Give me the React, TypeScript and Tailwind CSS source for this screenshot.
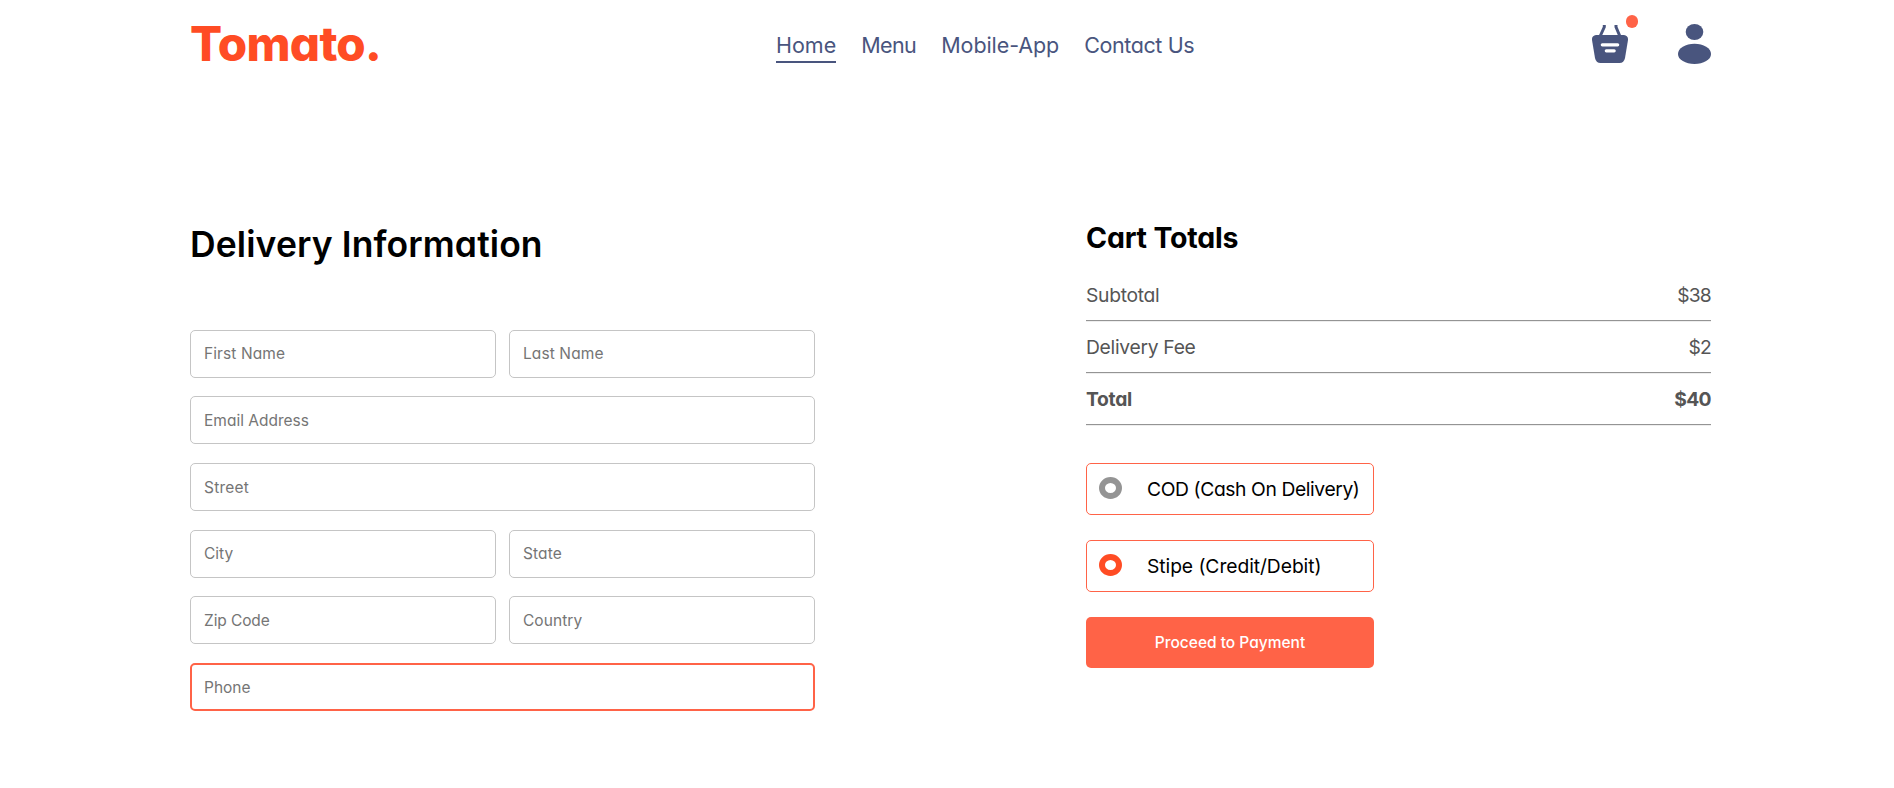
const navItems = [
  { label: "Home", className: "border-b-2 border-[#49557e]" },
  { label: "Menu", className: "tracking-[-0.6px]" },
  { label: "Mobile-App", className: "tracking-[-0.08px]" },
  { label: "Contact Us", className: "tracking-[-0.4px]" },
];

const fields = [
  { label: "First Name", className: "border border-[#c5c5c5] px-[13px] tracking-[0.1px]" },
  { label: "Last Name", className: "border border-[#c5c5c5] px-[13px] tracking-[0.1px]" },
  { label: "Email Address", className: "col-span-2 border border-[#c5c5c5] px-[13px]" },
  { label: "Street", className: "col-span-2 border border-[#c5c5c5] px-[13px] tracking-[0.2px]" },
  { label: "City", className: "border border-[#c5c5c5] px-[13px]" },
  { label: "State", className: "border border-[#c5c5c5] px-[13px] tracking-[0.1px]" },
  { label: "Zip Code", className: "border border-[#c5c5c5] px-[13px] tracking-[-0.1px]" },
  { label: "Country", className: "border border-[#c5c5c5] px-[13px] tracking-[0.05px]" },
  { label: "Phone", className: "col-span-2 border-2 border-[#ff6347] px-[12px]" },
];

const totals = [
  { label: "Subtotal", value: "$38", row: "", labelClass: "tracking-[-0.3px]", valueClass: "tracking-[-0.8px]" },
  { label: "Delivery Fee", value: "$2", row: "", labelClass: "tracking-[-0.3px]", valueClass: "tracking-[-0.8px]" },
  { label: "Total", value: "$40", row: "font-bold", labelClass: "tracking-[-0.3px]", valueClass: "tracking-[-0.6px]" },
];

const payments = [
  { label: "COD (Cash On Delivery)", color: "#949494", className: "tracking-[-0.4px]" },
  { label: "Stipe (Credit/Debit)", color: "#ff4c24", className: "tracking-[-0.07px]" },
];

function Basket() {
  return (
    <svg width="36" height="38" viewBox="0 0 36 38" className="block">
      <path d="M8 11.500 12.300 2V0M28 11.500 24 2V0" stroke="#49557e" strokeWidth="3" fill="none" />
      <path d="M4 10H32Q36.500 11 36 15L33 33Q32 38 27.500 38H8.500Q4 38 3 33L0 15Q-.5 11 4 10Z" fill="#49557e" />
      <path d="M10.300 19.800H25.700M14.300 25.800H22.200" stroke="#fff" strokeWidth="3.200" strokeLinecap="round" />
    </svg>
  );
}

function Person() {
  return (
    <svg width="33" height="40" viewBox="0 0 33 40" className="block">
      <ellipse cx="16.500" cy="8" rx="8.800" ry="8" fill="#49557e" />
      <ellipse cx="16.500" cy="29.900" rx="16.500" ry="10.100" fill="#49557e" />
    </svg>
  );
}

function Ring({ color }: { color: string }) {
  return (
    <svg width="23" height="22" viewBox="0 0 23 22" className="mb-[2px] block">
      <ellipse cx="11.500" cy="11" rx="8.500" ry="8" fill="none" stroke={color} strokeWidth="6" />
    </svg>
  );
}

export default function App() {
  return (
    <div className="min-h-[788px] bg-white font-['Inter',sans-serif] text-black [font-feature-settings:'cv11','liga'_0,'calt'_0]">
      <header className="flex h-[219px] items-start pl-[190px] pr-[183px]">
        <div className="mt-[19px] w-[586px] text-[47.5px] font-extrabold leading-[50px] tracking-[-0.7px] text-[#ff4c24]">
          Tomato.
        </div>
        <nav className="mt-[31px] flex gap-[25px] text-[21.5px] leading-[28px] text-[#49557e]">
          {navItems.map((item) => (
            <a key={item.label} href="#" className={"pb-[2px] " + item.className}>
              {item.label}
            </a>
          ))}
        </nav>
        <div className="ml-auto mt-[24px] flex gap-[50px]">
          <div className="relative mt-[1px]">
            <Basket />
            <span className="absolute -right-[10px] -top-[10px] h-[13px] w-[12px] rounded-full bg-[#ff6347]" />
          </div>
          <Person />
        </div>
      </header>
      <main className="flex justify-between pl-[190px] pr-[183px]">
        <section className="w-[625px] pt-[3px]">
          <h1 className="text-[35.5px] font-semibold leading-[46px] tracking-[0.1px]">Delivery Information</h1>
          <div className="mt-[61.7px] grid grid-cols-2 gap-x-[13px] gap-y-[18.7px]">
            {fields.map((field) => (
              <input
                key={field.label}
                placeholder={field.label}
                className={"h-[48px] w-full rounded-[5px] text-[15.5px] outline-none placeholder-[#757575] " + field.className}
              />
            ))}
          </div>
        </section>
        <section className="w-[625px]">
          <h2 className="text-[28.5px] font-bold leading-[38px] tracking-[-0.2px]">Cart Totals</h2>
          <div className="mt-[26px] flex flex-col gap-[14px] text-[19.3px] leading-[24px] text-[#555]">
            {totals.map((t) => (
              <div
                key={t.label}
                className={"flex justify-between border-b border-[#949494] pb-[13px] shadow-[0_1px_0_#eeeeee] " + t.row}
              >
                <span className={t.labelClass}>{t.label}</span>
                <span className={t.valueClass}>{t.value}</span>
              </div>
            ))}
          </div>
          <div className="mt-[38px] flex w-[288px] flex-col gap-[25px]">
            {payments.map((p) => (
              <div
                key={p.label}
                className="flex h-[52px] items-center gap-[25px] rounded-[5px] border border-[#ff6347] pl-[12px] text-[19.3px]"
              >
                <Ring color={p.color} />
                <span className={p.className}>{p.label}</span>
              </div>
            ))}
            <button className="h-[51px] rounded-[5px] bg-[#ff6347] text-[15.5px] font-medium text-white">
              Proceed to Payment
            </button>
          </div>
        </section>
      </main>
    </div>
  );
}
